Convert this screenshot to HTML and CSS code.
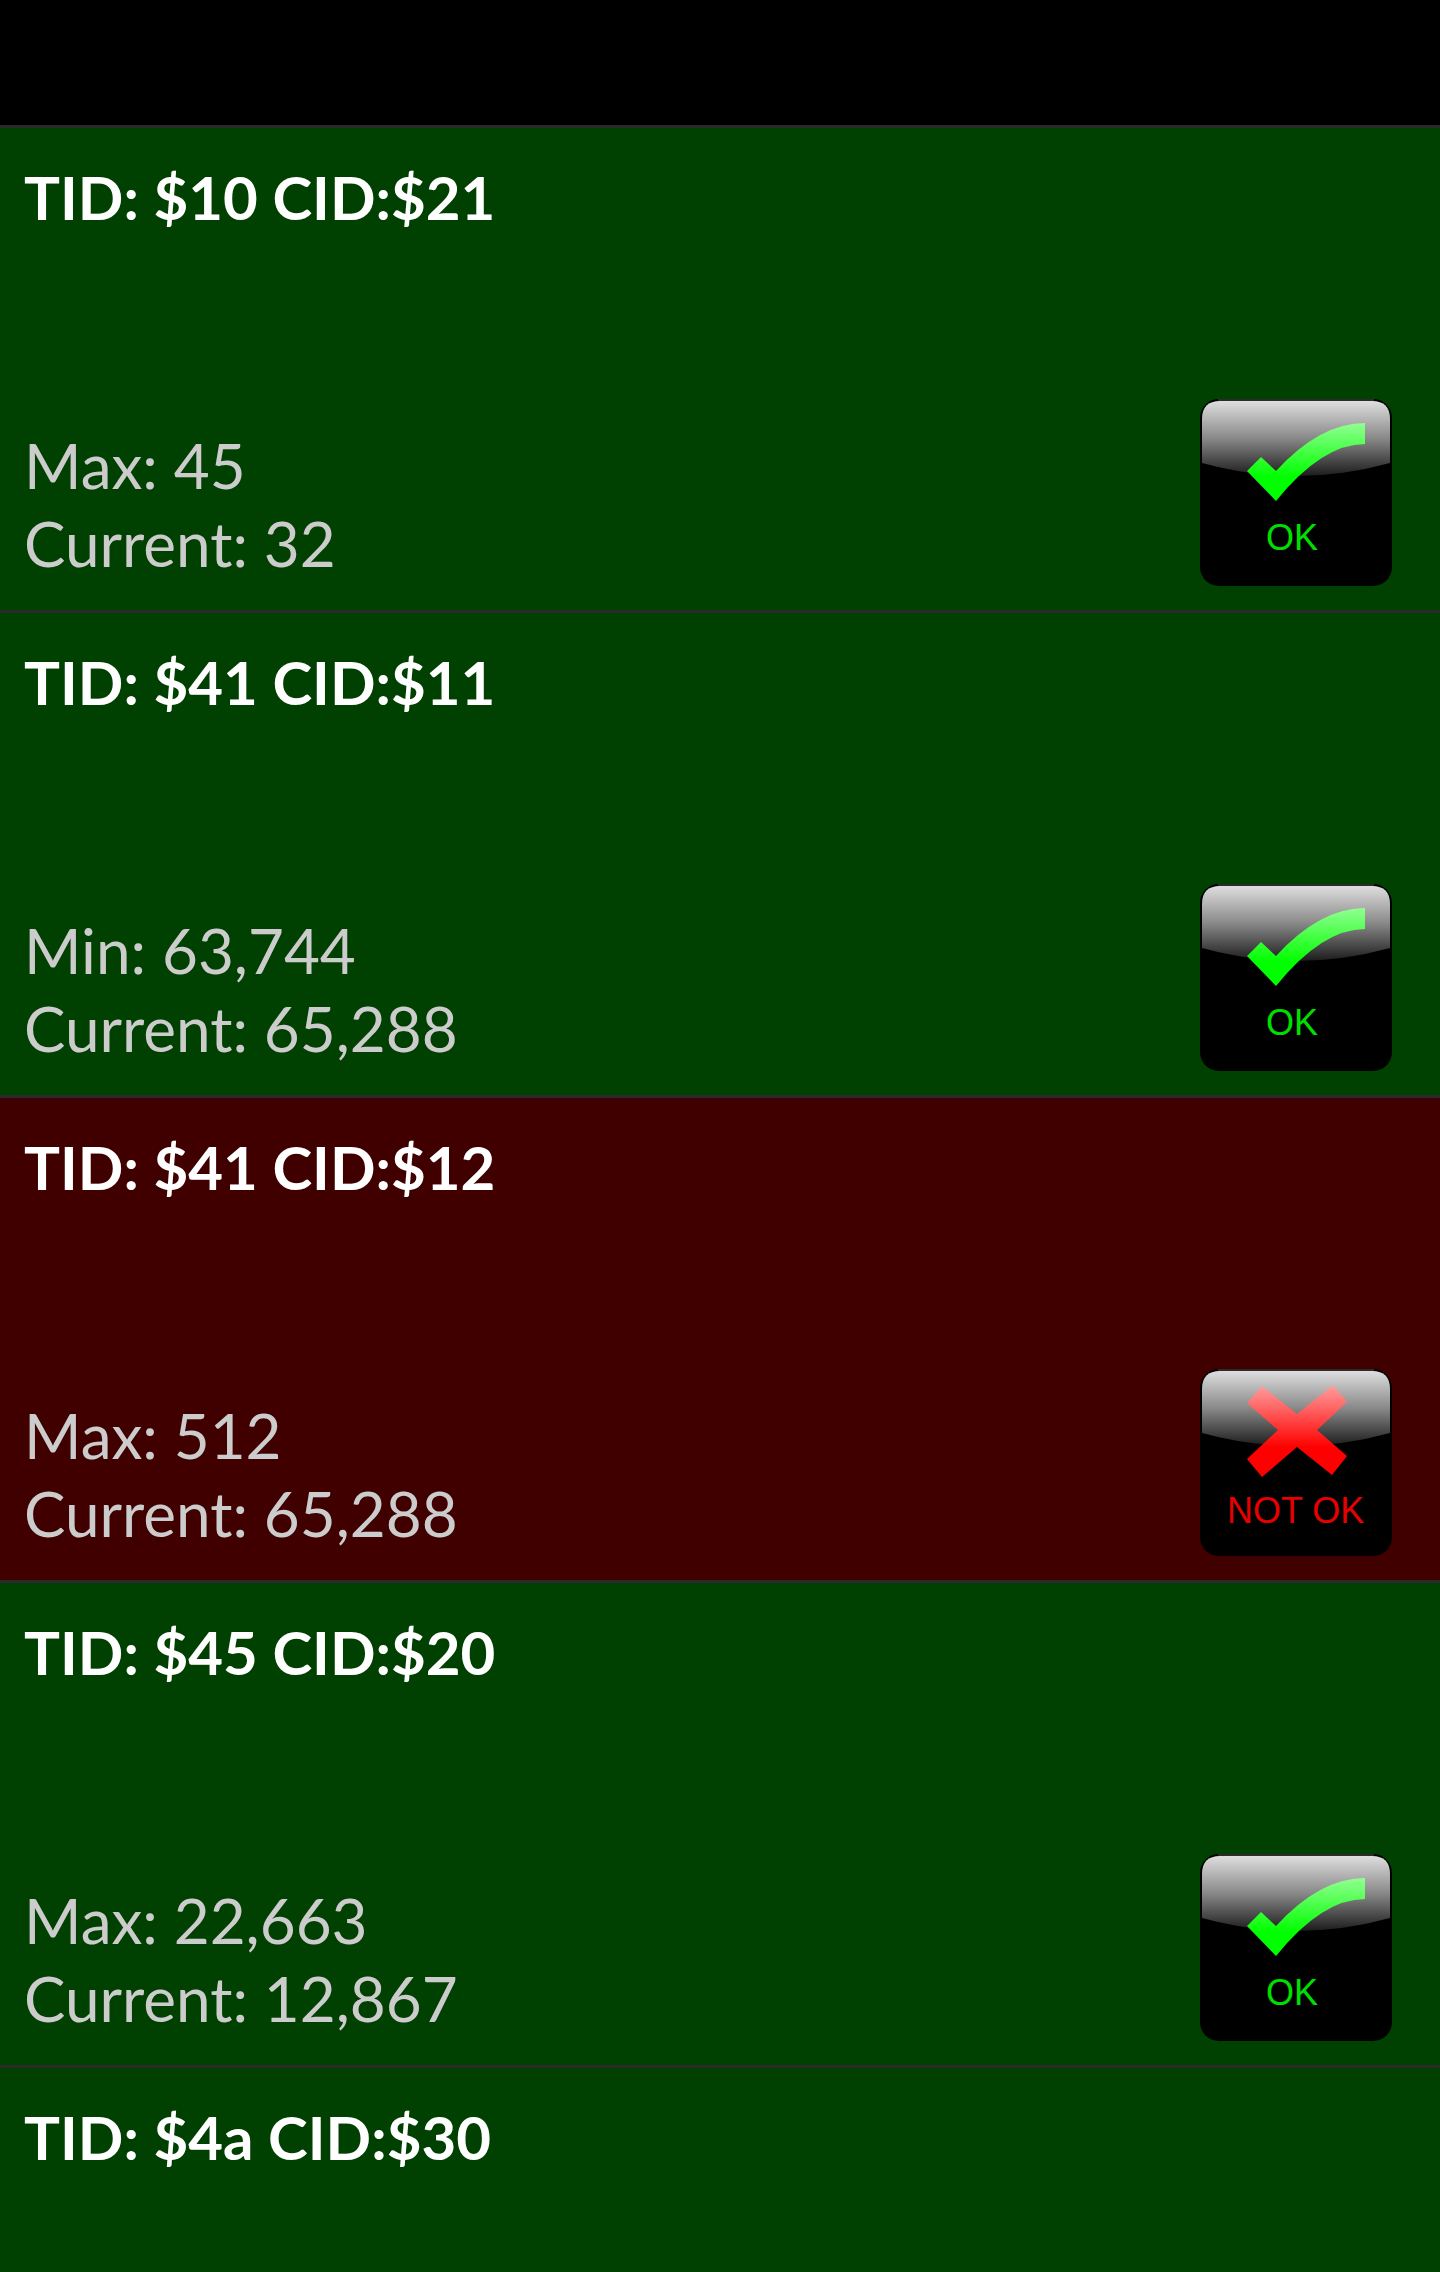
FILE: index.html
```html
<!DOCTYPE html>
<html lang="en">
<head>
<meta charset="utf-8">
<meta name="viewport" content="width=device-width, initial-scale=1">
<title>Test results</title>
<link rel="stylesheet" href="styles.css">
</head>
<body>
<svg class="defs" width="0" height="0" aria-hidden="true">
  <defs>
    <linearGradient id="gloss" x1="0" y1="0" x2="0" y2="1">
      <stop offset="0" stop-color="#dedede"/>
      <stop offset="0.5" stop-color="#888"/>
      <stop offset="1" stop-color="#1c1c1c"/>
    </linearGradient>
    <linearGradient id="green" gradientUnits="userSpaceOnUse" x1="0" y1="24" x2="0" y2="78">
      <stop offset="0" stop-color="#92ff92"/>
      <stop offset="1" stop-color="#00ff00"/>
    </linearGradient>
    <linearGradient id="red" gradientUnits="userSpaceOnUse" x1="0" y1="16" x2="0" y2="78">
      <stop offset="0" stop-color="#ffa0a0"/>
      <stop offset="1" stop-color="#ff0000"/>
    </linearGradient>
    <g id="tile">
      <rect width="192" height="187" rx="19" fill="#000"/>
      <path d="M2 64V20Q2 2 20 2H172Q190 2 190 20V64Q96 90 2 64Z" fill="url(#gloss)"/>
      <path d="M18 1H174" stroke="#2b2b2b" stroke-width="2"/>
    </g>
    <symbol id="ok" viewBox="0 0 192 187">
      <use href="#tile"/>
      <path d="M47 72L61 58L76 72Q120 24 165 24V45Q122 45 76 102Z" fill="url(#green)"/>
      <text x="66" y="151" font-size="36" fill="#00e000">OK</text>
    </symbol>
    <symbol id="not-ok" viewBox="0 0 192 187">
      <use href="#tile"/>
      <path d="M62 17L97 45L133 16L147 33L117 61L147 87L132 106L97 78L62 108L47 90L78 61L47 34Z" fill="url(#red)"/>
      <text x="27" y="154" font-size="36" fill="#e80000">NOT OK</text>
    </symbol>
  </defs>
</svg>
<main class="screen">
  <header class="bar"></header>
  <ul class="results">
    <li class="result">
      <h2 class="title">TID: $10 CID:$21</h2>
      <div class="values"><p>Max: 45</p><p>Current: 32</p></div>
      <svg class="status" role="img" aria-label="OK"><use href="#ok"/></svg>
    </li>
    <li class="result">
      <h2 class="title">TID: $41 CID:$11</h2>
      <div class="values"><p>Min: 63,744</p><p>Current: 65,288</p></div>
      <svg class="status" role="img" aria-label="OK"><use href="#ok"/></svg>
    </li>
    <li class="result failed">
      <h2 class="title">TID: $41 CID:$12</h2>
      <div class="values"><p>Max: 512</p><p>Current: 65,288</p></div>
      <svg class="status" role="img" aria-label="Not OK"><use href="#not-ok"/></svg>
    </li>
    <li class="result">
      <h2 class="title">TID: $45 CID:$20</h2>
      <div class="values"><p>Max: 22,663</p><p>Current: 12,867</p></div>
      <svg class="status" role="img" aria-label="OK"><use href="#ok"/></svg>
    </li>
    <li class="result partial">
      <h2 class="title">TID: $4a CID:$30</h2>
    </li>
  </ul>
</main>
</body>
</html>
```
FILE: styles.css
```css
* {
  box-sizing: border-box;
}

body {
  margin: 0;
  background: #000;
  font-family: Lato, "Liberation Sans", sans-serif;
}

.defs {
  position: absolute;
}

.screen {
  display: flex;
  flex-direction: column;
  min-height: 100vh;
}

.bar {
  height: 125px;
}

.results {
  display: flex;
  flex: 1;
  flex-direction: column;
  margin: 0;
  padding: 0;
  list-style: none;
}

.result {
  display: grid;
  grid-template-columns: 1fr auto;
  grid-template-rows: auto 1fr;
  align-items: end;
  min-height: 485px;
  padding: 30px 48px 24px 24px;
  border-top: 3px solid #2a2a2a;
  background: #004000;
}

.result.failed {
  background: #400000;
}

.result.partial {
  flex: 1;
  min-height: 200px;
}

.title {
  grid-column: 1 / -1;
  margin: 0;
  color: #fff;
  font-size: 60px;
  font-weight: 700;
  line-height: 78px;
}

.values {
  padding-bottom: 4px;
  color: #ccc;
  font-size: 62px;
  line-height: 78px;
}

.values p {
  margin: 0;
}

.status {
  width: 192px;
  height: 187px;
  font-family: "Liberation Sans", Arial, sans-serif;
}
```
